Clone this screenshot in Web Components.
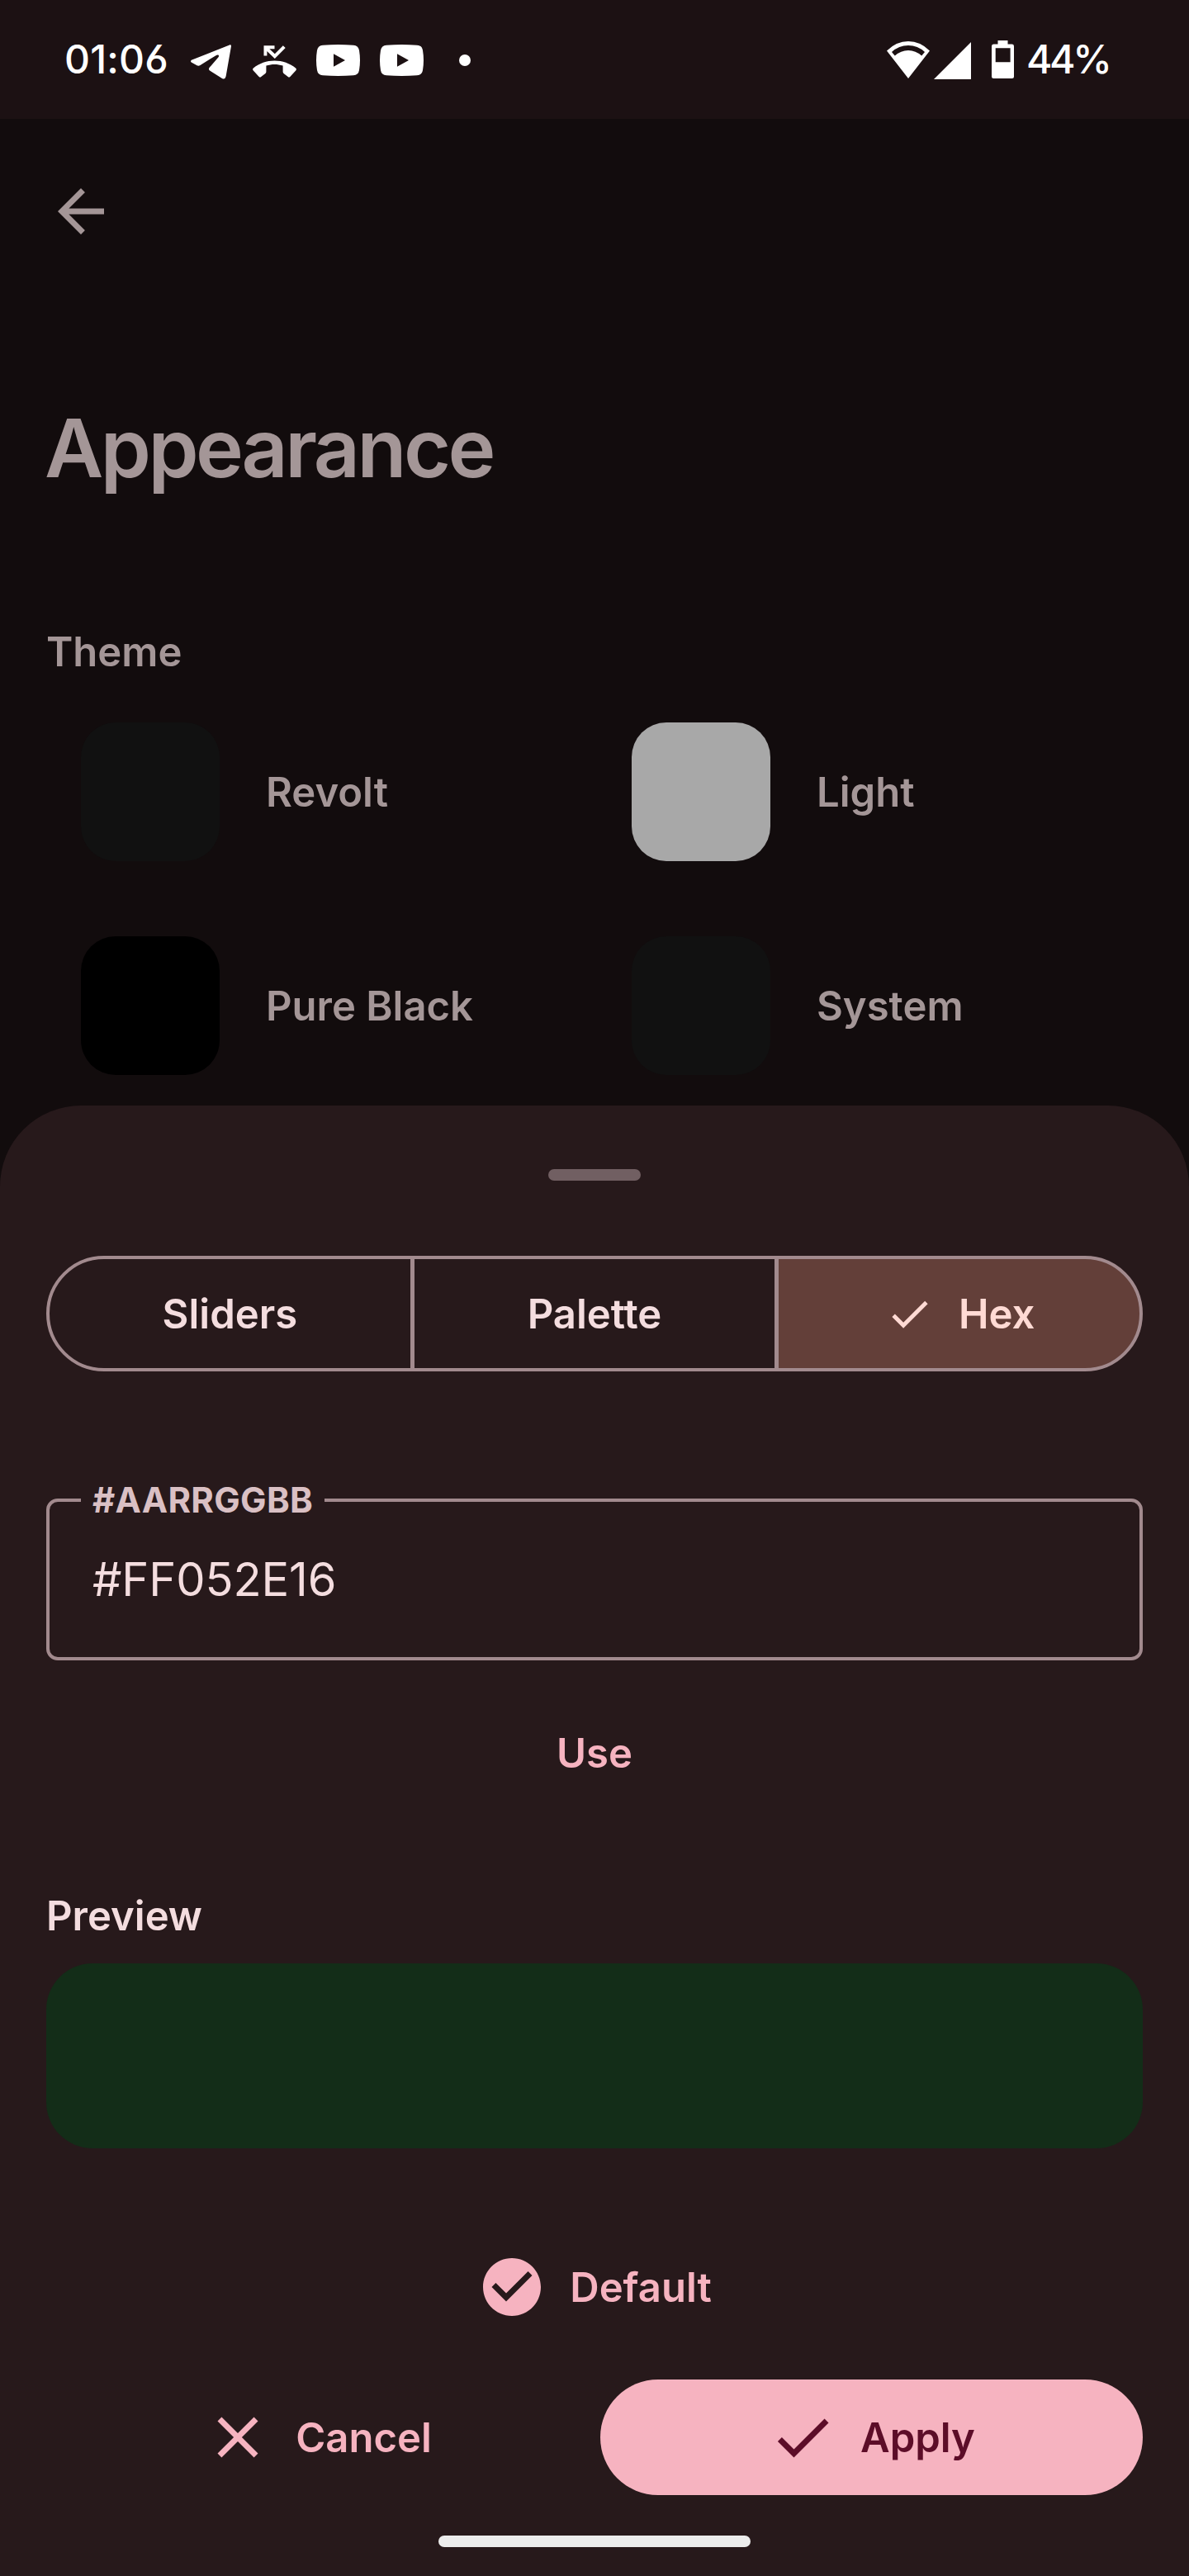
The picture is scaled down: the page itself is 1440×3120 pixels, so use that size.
<!DOCTYPE html>
<html lang="en">
<head>
<meta charset="utf-8">
<title>Appearance</title>
<style>
  html, body { margin: 0; background: #27191b; }
  body { width: 1440px; font-family: Inter, "Noto Sans", sans-serif; }
</style>
</head>
<body>
<appearance-screen></appearance-screen>

<script>
const define = (name, html) => {
  const template = document.createElement('template');
  template.innerHTML = html;
  customElements.define(name, class extends HTMLElement {
    constructor() {
      super();
      this.attachShadow({ mode: 'open' }).append(template.content.cloneNode(true));
    }
  });
};

/* Icons: name -> [viewBox, width, height, markup] */
const ICONS = {
  back: ['0 0 24 24', 84, 84, '<path d="M20 11H7.83l5.59-5.59L12 4l-8 8 8 8 1.41-1.41L7.83 13H20v-2z"/>'],
  check: ['0 0 24 24', 84, 84, '<path d="M9 16.17L4.83 12l-1.42 1.41L9 19 21 7l-1.41-1.41z"/>'],
  checkSmall: ['-.8 -.8 25.6 25.6', 63, 63, '<path d="M9 16.17L4.83 12l-1.42 1.41L9 19 21 7l-1.41-1.41z"/>'],
  close: ['0 0 24 24', 84, 84, '<path d="M19 6.41L17.59 5 12 10.59 6.41 5 5 6.41 10.59 12 5 17.59 6.41 19 12 13.41 17.59 19 19 17.59 13.41 12z"/>'],
  checkCircle: ['0 0 24 24', 84, 84, '<path d="M12 2C6.48 2 2 6.48 2 12s4.48 10 10 10 10-4.48 10-10S17.52 2 12 2zm-2 15l-5-5 1.41-1.41L10 14.17l7.59-7.59L19 8l-9 9z"/>'],
  telegram: ['0 0 49 42', 49, 42, '<path d="M47 .4 1.5 18.5C-.3 19.3-.3 20.6.8 21.6L7.500 25.300Q9.500 26.300 11.500 25L30.500 13.200C33 11.600 35 13 33.500 15.200L22.500 28Q21.300 29.700 22.700 31.300L38 41Q41.500 43 42.600 38.500L48.900 2.400C49.200.6 48.300-.1 47 .4z"/>'],
  missed: ['0 0 53 39', 53, 39, '<path d="M13.500.3H26.500V4.200H20.300L26.800 10.300 36.800.3 39.700 3.100 26.800 15.900 17.400 7V12.500H13.500zM.600 27.800C15 15.400 38 15.400 52.400 27.800Q53.300 29 52.400 30.300L45.300 38Q44 39 42.800 38L37.600 34Q36.600 33 36.600 31.800V24.600C30 22.500 23 22.500 16.400 24.600V31.800Q16.400 33 15.400 34L10.200 38Q9 39 7.700 38L.600 30.300Q-.3 29 .600 27.800z"/>'],
  video: ['0 0 53 38', 53, 38, '<path fill-rule="evenodd" d="M8 .7Q26.500-.7 45 .7Q51 1 52 7Q54 19 52 31Q51 37 45 37.300Q26.500 38.700 8 37.300Q2 37 1 31Q-1 19 1 7Q2 1 8 .7zM21 11.300V26.700L35 19z"/>'],
  dot: ['0 0 14 14', 14, 14, '<circle cx="7" cy="7" r="7"/>'],
  wifi: ['0 0 52 45', 52, 45, '<path fill-rule="evenodd" d="M0 11.500Q11.500 0 26 0T52 11.500L26 45zM6 13 9.800 17.600Q17 11 26 11T42.200 17.600L46 13Q37.500 5 26 5T6 13z"/>'],
  signal: ['0 0 45 45', 45, 45, '<path d="M45 0V45H0z"/>'],
  battery: ['0 0 27 46', 27, 46, '<path fill-rule="evenodd" d="M7.500 0H19.500V4.600H24.500Q27 4.600 27 7V43.500Q27 46 24.500 46H2.500Q0 46 0 43.500V7Q0 4.600 2.500 4.600H7.500zM4.700 9.300V26.300H22.600V9.300z"/>']
};
customElements.define('ui-icon', class extends HTMLElement {
  constructor() { super(); this.attachShadow({ mode: 'open' }); }
  connectedCallback() {
    const [box, w, h, body] = ICONS[this.getAttribute('name')];
    this.shadowRoot.innerHTML = `<style>:host{display:block;flex:none;width:${w}px;height:${h}px}svg{display:block}</style>
      <svg viewBox="${box}" width="${w}" height="${h}" fill="currentColor" aria-hidden="true">${body}</svg>`;
  }
});

define('status-bar', `
<style>
  :host { display: flex; justify-content: space-between; box-sizing: border-box; height: 144px; padding: 0 98px 0 78px;
    background: #1c1113; color: #fff; font-size: 48px; font-weight: 550; line-height: 144px; }
  div { display: flex; align-items: center; }
  .time { width: 128px; margin-right: 25px; letter-spacing: .2px; font-feature-settings: "ss01"; }
  .missed { margin: 4px 24px 0 26px; }
  .tg { margin-top: 6px; }
  .v2 { margin: 0 43px 0 24px; }
  .vid { margin-top: 2px; }
  .dot { margin-top: 2px; }
  .battery { margin: 0 15px 0 25px; }
  .signal { margin: 2px 0 0 5px; }
  .wifi { margin-top: 1px; }
  .pct { width: 99px; letter-spacing: -3.4px; white-space: nowrap; }
</style>
<div><span class="time">01:06</span><ui-icon class="tg" name="telegram"></ui-icon><ui-icon class="missed" name="missed"></ui-icon><ui-icon class="vid" name="video"></ui-icon><ui-icon class="vid v2" name="video"></ui-icon><ui-icon class="dot" name="dot"></ui-icon></div>
<div><ui-icon class="wifi" name="wifi"></ui-icon><ui-icon class="signal" name="signal"></ui-icon><ui-icon class="battery" name="battery"></ui-icon><span class="pct">44%</span></div>`);

define('theme-option', `
<style>
  :host { display: flex; align-items: center; gap: 56px; height: 168px; font-size: 49px; font-weight: 600; }
  i { width: 168px; height: 168px; border-radius: 42px; background: var(--swatch); }
</style>
<i></i><slot></slot>`);

define('appearance-page', `
<style>
  :host { display: flow-root; height: 1195px; background: #120c0d; color: #a49697; }
  .back { display: block; margin: 70px 0 0 56px; }
  h1 { margin: 185px 0 0 54px; font-size: 98px; font-weight: 600; line-height: 120px; letter-spacing: -3.5px; }
  h2 { margin: 152px 0 0 56px; font-size: 49px; font-weight: 600; line-height: 70px; }
  .themes { display: grid; grid-template-columns: 667px 1fr; row-gap: 91px; margin: 50px 0 0 98px; }
</style>
<ui-icon class="back" name="back"></ui-icon>
<h1>Appearance</h1>
<h2>Theme</h2>
<div class="themes">
  <theme-option style="--swatch:#111111">Revolt</theme-option>
  <theme-option style="--swatch:#a8a8a8">Light</theme-option>
  <theme-option style="--swatch:#000">Pure Black</theme-option>
  <theme-option style="--swatch:#111111">System</theme-option>
</div>`);

define('segment-item', `
<style>
  :host { display: flex; flex: 1; align-items: center; justify-content: center; gap: 28px; box-sizing: border-box;
    height: 140px; margin-left: -3px; border: 4px solid #a28a8e; font-size: 49px; font-weight: 600; }
  :host(:first-child) { margin-left: 0; border-radius: 70px 0 0 70px; }
  :host(:last-child) { border-radius: 0 70px 70px 0; }
  :host([selected]) { background: #633f39; color: #ffdad4; }
</style>
<slot name="icon"></slot><slot></slot>`);

define('segmented-buttons', `<style>:host { display: flex; }</style><slot></slot>`);

define('outlined-field', `
<style>
  :host { display: flex; align-items: center; position: relative; box-sizing: border-box; height: 196px; padding: 0 52px;
    border: 4px solid #a28a8e; border-radius: 14px; font-size: 56px; letter-spacing: -.1px; }
  .label { position: absolute; left: 38px; top: -27px; padding: 0 14px; background: #27191b; color: #dac0c4;
    font-size: 42px; font-weight: 700; line-height: 50px; letter-spacing: .3px; }
</style>
<span class="label"><slot name="label"></slot></span><slot></slot>`);

define('text-button', `
<style>
  :host { display: flex; align-items: center; justify-content: center; gap: 28px; height: 140px; border-radius: 70px;
    color: #f6b3c0; font-size: 49px; font-weight: 600; }
  :host([filled]) { background: #f6b3c0; color: #5c0d28; }
</style>
<slot name="icon"></slot><slot></slot>`);

define('color-sheet', `
<style>
  :host { display: flow-root; box-sizing: border-box; height: 1781px; padding: 0 56px; border-radius: 98px 98px 0 0;
    background: #27191b; color: #f4dddf; }
  .handle { width: 112px; height: 14px; margin: 77px auto 0; border-radius: 7px; background: #715f62; }
  segmented-buttons { margin-top: 91px; }
  outlined-field { margin-top: 154px; }
  .use { height: 70px; margin-top: 77px; }
  h3 { margin: 128px 0 0; font-size: 49px; font-weight: 600; line-height: 70px; }
  .preview { height: 224px; margin-top: 22px; border-radius: 56px; background: #132d18; }
  .default { margin-top: 98px; }
  .actions { display: grid; grid-template-columns: 1fr 1fr; gap: 14px; margin-top: 42px; }
  .home { width: 378px; height: 14px; margin: 49px auto 0; border-radius: 7px; background: #ececec; }
</style>
<div class="handle"></div>
<segmented-buttons>
  <segment-item>Sliders</segment-item>
  <segment-item>Palette</segment-item>
  <segment-item selected><ui-icon slot="icon" name="checkSmall"></ui-icon>Hex</segment-item>
</segmented-buttons>
<outlined-field><span slot="label">#AARRGGBB</span>#FF052E16</outlined-field>
<text-button class="use">Use</text-button>
<h3>Preview</h3>
<div class="preview"></div>
<text-button class="default"><ui-icon slot="icon" name="checkCircle"></ui-icon>Default</text-button>
<div class="actions">
  <text-button><ui-icon slot="icon" name="close"></ui-icon>Cancel</text-button>
  <text-button filled><ui-icon slot="icon" name="check"></ui-icon>Apply</text-button>
</div>
<div class="home"></div>`);

define('appearance-screen', `
<style>
  :host { display: block; width: 1440px; height: 3120px; overflow: hidden; background: #120c0d; }
</style>
<status-bar></status-bar>
<appearance-page></appearance-page>
<color-sheet></color-sheet>`);
</script>
</body>
</html>
